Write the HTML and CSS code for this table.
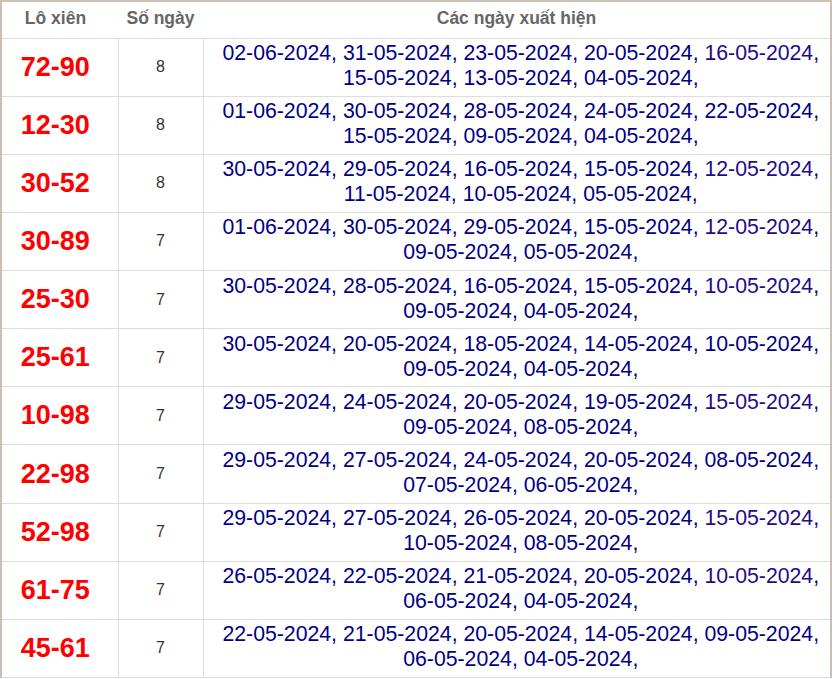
FILE: index.html
```html
<!DOCTYPE html>
<html lang="vi">
<head>
<meta charset="utf-8">
<title>Lô xiên</title>
<link rel="stylesheet" href="styles.css">
</head>
<body>
<table class="lx-table">
  <colgroup>
    <col class="c-pair">
    <col class="c-count">
    <col class="c-dates">
  </colgroup>
  <thead>
    <tr>
      <th class="h-pair">Lô xiên</th>
      <th>Số ngày</th>
      <th>Các ngày xuất hiện</th>
    </tr>
  </thead>
  <tbody>
    <tr><td class="pair">72-90</td><td class="count">8</td><td class="dates">02-06-2024, 31-05-2024, 23-05-2024, 20-05-2024, <span class="v">16-05-2024</span>, 15-05-2024, 13-05-2024, 04-05-2024,</td></tr>
    <tr><td class="pair">12-30</td><td class="count">8</td><td class="dates">01-06-2024, 30-05-2024, 28-05-2024, 24-05-2024, 22-05-2024, 15-05-2024, 09-05-2024, 04-05-2024,</td></tr>
    <tr><td class="pair">30-52</td><td class="count">8</td><td class="dates">30-05-2024, 29-05-2024, 16-05-2024, 15-05-2024, <span class="v">12-05-2024</span>, 11-05-2024, 10-05-2024, 05-05-2024,</td></tr>
    <tr><td class="pair">30-89</td><td class="count">7</td><td class="dates">01-06-2024, 30-05-2024, 29-05-2024, 15-05-2024, <span class="v">12-05-2024</span>, 09-05-2024, 05-05-2024,</td></tr>
    <tr><td class="pair">25-30</td><td class="count">7</td><td class="dates">30-05-2024, 28-05-2024, 16-05-2024, 15-05-2024, <span class="v">10-05-2024</span>, 09-05-2024, 04-05-2024,</td></tr>
    <tr><td class="pair">25-61</td><td class="count">7</td><td class="dates">30-05-2024, 20-05-2024, 18-05-2024, 14-05-2024, 10-05-2024, 09-05-2024, 04-05-2024,</td></tr>
    <tr><td class="pair">10-98</td><td class="count">7</td><td class="dates">29-05-2024, 24-05-2024, 20-05-2024, 19-05-2024, <span class="v">15-05-2024</span>, 09-05-2024, 08-05-2024,</td></tr>
    <tr><td class="pair">22-98</td><td class="count">7</td><td class="dates">29-05-2024, 27-05-2024, 24-05-2024, 20-05-2024, 08-05-2024, 07-05-2024, 06-05-2024,</td></tr>
    <tr><td class="pair">52-98</td><td class="count">7</td><td class="dates">29-05-2024, 27-05-2024, 26-05-2024, 20-05-2024, <span class="v">15-05-2024</span>, 10-05-2024, 08-05-2024,</td></tr>
    <tr><td class="pair">61-75</td><td class="count">7</td><td class="dates">26-05-2024, 22-05-2024, 21-05-2024, 20-05-2024, <span class="v">10-05-2024</span>, 06-05-2024, 04-05-2024,</td></tr>
    <tr><td class="pair">45-61</td><td class="count">7</td><td class="dates">22-05-2024, 21-05-2024, 20-05-2024, 14-05-2024, 09-05-2024, 06-05-2024, 04-05-2024,</td></tr>
  </tbody>
</table>
</body>
</html>
```
FILE: styles.css
```css
html, body {
  margin: 0;
  padding: 0;
  background: #fff;
}
body {
  font-family: "Liberation Sans", Arial, sans-serif;
  width: 832px;
}
.lx-table {
  width: 832px;
  border-collapse: collapse;
  table-layout: fixed;
  border-top: 2px solid #c9bfb2;
  border-left: 2px solid #c9bfb2;
  border-right: 2px solid #c9bfb2;
}
.c-pair { width: 117px; }
.c-count { width: 85px; }
.c-dates { width: auto; }
.lx-table th {
  box-sizing: border-box;
  height: 37px;
  padding: 0 4px 3px;
  font-size: 17.5px;
  font-weight: bold;
  color: #666;
  text-align: center;
  vertical-align: middle;
  border-bottom: 1px solid #ddd;
}
.lx-table th.h-pair {
  padding-right: 13px;
}
.lx-table td {
  border: 1px solid #ddd;
  text-align: center;
  vertical-align: middle;
  height: 58.15px;
  padding: 0 4px;
  box-sizing: border-box;
}
.lx-table tr td:first-child { border-left: 0; }
.lx-table tr td:last-child { border-right: 0; }
.lx-table td.pair {
  color: #f00;
  font-weight: bold;
  font-size: 27px;
  padding-right: 13px;
}
.count {
  color: #333;
  font-size: 16px;
}
.lx-table td.dates {
  color: #000087;
  font-size: 21.25px;
  line-height: 25px;
  padding-left: 10px;
  padding-right: 2px;
  padding-bottom: 2px;
}
.v {
  color: #240a88;
}
```
